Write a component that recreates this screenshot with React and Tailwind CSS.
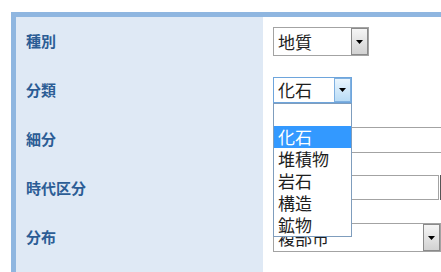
import React from 'react';

const font = { fontFamily: '"Noto Sans CJK JP", "Noto Sans", sans-serif' };

const Arrow = ({ focused }) => (
  <div
    className={
      'flex h-full w-[17px] items-center justify-center border ' +
      (focused
        ? 'border-[#7fb0e0] bg-gradient-to-b from-[#eaf5fd] to-[#b9dcf6]'
        : 'border-[#8a8a8a] bg-gradient-to-b from-[#f5f5f5] to-[#d2d2d2]')
    }
  >
    <svg width="7" height="4" viewBox="0 0 7 4">
      <path d="M0 0h7L3.5 4z" fill="#000" />
    </svg>
  </div>
);

const Select = ({ value, width, height, focused, children }) => (
  <div className="relative shrink-0" style={{ width }}>
    <div
      className={
        'flex items-center border bg-white pl-[4px] ' +
        (focused ? 'border-[#6ea5dc]' : 'border-[#a3a3a3]')
      }
      style={{ height }}
    >
      <span className="flex-1 text-[17px] leading-none text-[#1e1e1e]">{value}</span>
      <Arrow focused={focused} />
    </div>
    {children}
  </div>
);

const Row = ({ label, children, grow }) => (
  <div className={grow ? 'flex flex-1' : 'flex h-[49px]'}>
    <div className="flex w-[247px] shrink-0 items-center bg-[#dfe9f5] pl-[10px] text-[15px] font-bold text-[#2c5d95]">
      {label}
    </div>
    <div className="flex min-w-0 flex-1 items-center bg-white pl-[10px]">{children}</div>
  </div>
);

const options = ['', '化石', '堆積物', '岩石', '構造', '鉱物'];

export default function App() {
  return (
    <div className="h-[272px] w-[441px] overflow-hidden bg-white pt-[12px] pl-[11px]" style={font}>
      <div className="flex h-[260px] w-[430px] flex-col border-t-[5px] border-l-[5px] border-[#8fb6e0]">
        <Row label="種別">
          <Select value="地質" width={96} height={29} />
        </Row>
        <Row label="分類">
          <div className="relative z-10 -mt-[2px]">
            <Select value="化石" width={79} height={26} focused>
              <div className="absolute left-0 top-full w-[79px] border border-[#7f9dbd] bg-white">
                {options.map((o, i) => (
                  <div
                    key={i}
                    className={
                      'flex h-[22px] items-center pl-[4px] text-[17px] leading-none ' +
                      (o === '化石' ? 'bg-[#3399ff] text-white' : 'text-[#1e1e1e]')
                    }
                  >
                    {o}
                  </div>
                ))}
              </div>
            </Select>
          </div>
        </Row>
        <Row label="細分">
          <div className="h-[26px] w-[200px] shrink-0 border border-[#a3a3a3] bg-white" />
        </Row>
        <Row label="時代区分">
          <div className="-mt-[2px] flex shrink-0 gap-[1px]">
            <div className="h-[25px] w-[166px] border border-[#a3a3a3] bg-white" />
            <div className="h-[25px] w-[40px] border border-[#555] bg-white" />
          </div>
        </Row>
        <Row label="分布">
          <Select value="複部市" width={168} height={29} />
        </Row>
        <Row grow />
      </div>
    </div>
  );
}
